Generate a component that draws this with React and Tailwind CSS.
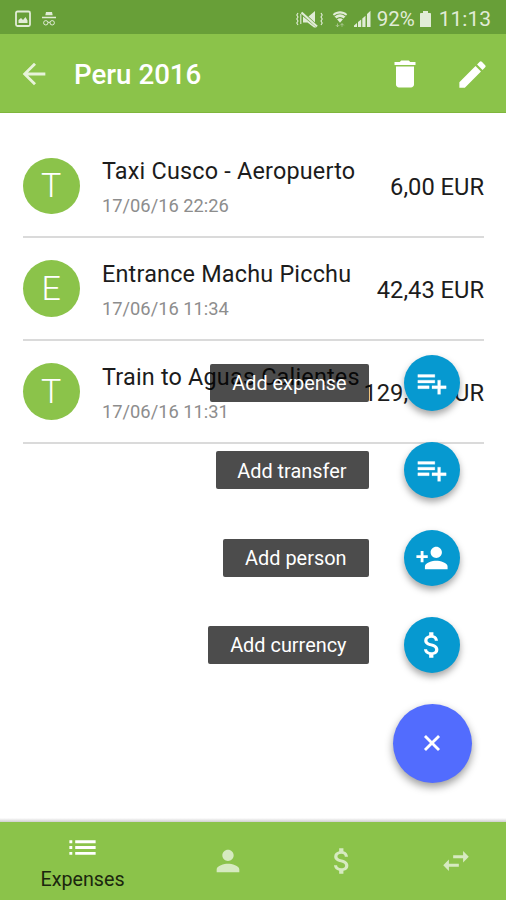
import {
	MdAdd,
	MdArrowBack,
	MdAttachMoney,
	MdDelete,
	MdEdit,
	MdList,
	MdPerson,
	MdPersonAdd,
	MdSwapHoriz,
} from "react-icons/md"

function ListAddIcon({ className }) {
	return (
		<svg className={className} viewBox="0 0 24 24" fill="currentColor" aria-hidden="true">
			<path d="M14 10H2v2h12v-2zm0-4H2v2h12V6zm4 8v-4h-2v4h-4v2h4v4h2v-4h4v-2h-4zM2 16h8v-2H2v2z" stroke="currentColor" strokeWidth="0.2" />
		</svg>
	)
}

const expenses = [
	{ title: "Taxi Cusco - Aeropuerto", date: "17/06/16 22:26", amount: "6,00 EUR" },
	{ title: "Entrance Machu Picchu", date: "17/06/16 11:34", amount: "42,43 EUR" },
	{ title: "Train to Aguas Calientes", date: "17/06/16 11:31", amount: "129,75 EUR" },
]

const actions = [
	{ name: "Add expense", icon: ListAddIcon, width: "w-[159px]" },
	{ name: "Add transfer", icon: ListAddIcon, width: "w-[153px]" },
	{ name: "Add person", icon: MdPersonAdd, width: "w-[146px]" },
	{ name: "Add currency", icon: MdAttachMoney, width: "w-[161px]" },
]

const tabs = [
	{ name: "People", icon: MdPerson },
	{ name: "Currencies", icon: MdAttachMoney },
	{ name: "Transfers", icon: MdSwapHoriz },
]

function StatusBar() {
	return (
		<div className="flex h-[34px] items-center justify-between bg-[#689f38] pt-[3px] pr-[15px] pl-[14px] text-[#e1ecd7]">
			<div className="flex items-center gap-[10px]">
				<svg width="18" height="18" viewBox="0 0 18 18" aria-hidden="true">
					<rect x="2" y="1.5" width="14" height="14.5" rx="1.5" fill="none" stroke="currentColor" strokeWidth="1.8" />
					<path d="M4.5 13V10l2.5-2 2 2 2.5-3 2 3.5V13z" fill="currentColor" />
				</svg>
				<svg width="14" height="16" viewBox="0 0 14 16" aria-hidden="true">
					<path d="M4 1h6l.7 3.2H3.3zM0 5.8h14v1.4H0z" fill="currentColor" />
					<g fill="none" stroke="currentColor" strokeWidth="1">
						<circle cx="3.8" cy="11.8" r="2.2" />
						<circle cx="10.2" cy="11.8" r="2.2" />
						<path d="M6 11.3h2" />
					</g>
				</svg>
			</div>
			<div className="flex items-center">
				<svg width="27" height="18" viewBox="0 0 27 18" aria-hidden="true">
					<path d="M2 3l-1.2 2L2 7 .8 9 2 11l-1.2 2L2 15M4.8 4v10M25 3l1.2 2L25 7l1.2 2-1.2 2 1.2 2-1.2 2" fill="none" stroke="currentColor" strokeWidth="1.1" />
					<path d="M7 6.5v6h4.5l6.5 5h2.5zM12.5 6.5L19 1v11.5z" fill="currentColor" />
					<path d="M5.5 2.5L21 16.5" stroke="currentColor" strokeWidth="2.2" />
				</svg>
				<svg className="ml-[9px]" width="16" height="18" viewBox="0 0 16 18" aria-hidden="true">
					<path d="M.8 4.2C5 .4 11 .4 15.2 4.2L8 12.8z" fill="currentColor" />
					<path d="M2.2 6.2c3.5-3 8.1-3 11.6 0M4.5 9c2.2-1.8 4.8-1.8 7 0" fill="none" stroke="#689f38" strokeWidth="1.1" />
					<path d="M5.5 13.5v3M3.800 15l1.700 1.800L7.200 15M10 16.800v-3M8.300 15.300l1.700-1.800 1.700 1.800" fill="none" stroke="currentColor" opacity=".5" />
				</svg>
				<svg className="ml-[5px]" width="19" height="18" viewBox="0 0 19 18" aria-hidden="true">
					<path d="M1 17v-1.5L4 13v4zM5 17v-5l3.2-2.5V17zM9.3 17V8.5l3.2-2.7V17zM14 17V4l3.5-3.3V17z" fill="currentColor" />
				</svg>
				<span className="ml-[5px] pt-px text-[20.5px] leading-none">92%</span>
				<svg className="ml-[4px]" width="13" height="18" viewBox="0 0 13 18" aria-hidden="true">
					<path d="M4 1h5v2h2.2q.8 0 .8.8V17H1V3.8q0-.8.8-.8H4z" fill="currentColor" />
				</svg>
				<span className="ml-[7px] pt-px text-[21px] leading-none">11:13</span>
			</div>
		</div>
	)
}

function Toolbar() {
	return (
		<header className="flex h-[79px] items-center border-b border-[#7fb63c] bg-[#8bc34a] pt-[2px] pr-[16px] pl-[17px] text-white">
			<MdArrowBack className="h-[34px] w-[34px] opacity-80" />
			<h1 className="ml-[23px] flex-1 pt-[2px] text-[27.7px] font-medium">Peru 2016</h1>
			<MdDelete className="h-[36px] w-[36px]" />
			<MdEdit className="ml-[32px] h-[35px] w-[35px]" />
		</header>
	)
}

function ExpenseRow({ expense }) {
	return (
		<li className="flex h-[102.8px] items-center border-b-2 border-[#dadada]">
			<div className="flex h-[56.5px] w-[56.5px] shrink-0 items-center justify-center rounded-full bg-[#8bc34a] text-[34px] font-light text-white">
				{expense.title[0]}
			</div>
			<div className="ml-[22.5px] flex-1 pt-[4px] whitespace-nowrap">
				<p className="text-[23.4px] leading-[30px] tracking-[0.2px] text-[#1c1c1c]">{expense.title}</p>
				<p className="mt-[7px] text-[18.3px] leading-[26px] text-[#8d8d8d]">{expense.date}</p>
			</div>
			<p className="pt-[4px] text-[23.7px] whitespace-nowrap text-[#1c1c1c]">{expense.amount}</p>
		</li>
	)
}

// Speed dial, floats over the list
function SpeedDial() {
	return (
		<div className="absolute right-[34px] bottom-[117px] flex flex-col items-end">
			{actions.map((action) => (
				<div key={action.name} className="mr-[12px] mb-[31.2px] flex items-center">
					<span className={`${action.width} flex h-[38px] items-center justify-end rounded-[2px] bg-black/70 pt-[2px] pr-[22.5px] text-[19.9px] whitespace-nowrap text-white`}>
						{action.name}
					</span>
					<button type="button" aria-label={action.name} className="ml-[35px] flex h-[56px] w-[56px] items-center justify-center rounded-full bg-[#0699d0] text-white shadow-[0_4px_7px_rgba(0,0,0,0.35)]">
						<action.icon className="h-[34px] w-[34px]" />
					</button>
				</div>
			))}
			<button type="button" aria-label="Close menu" className="flex h-[79px] w-[79px] items-center justify-center rounded-full bg-[#526cfe] text-white shadow-[0_4px_8px_rgba(0,0,0,0.4)]">
				<MdAdd className="mr-[1px] mb-[1px] h-[34px] w-[34px] rotate-45" />
			</button>
		</div>
	)
}

function BottomNav() {
	return (
		<nav className="grid h-[78px] grid-cols-[171px_114px_113px_115px] overflow-hidden bg-[#8bc34a]">
			<button type="button" className="flex flex-col items-center pt-[8px] pr-[6px]">
				<MdList className="h-[35px] w-[35px] text-white" />
				<span className="pt-px text-[19.7px] leading-[28px] text-[#1b270e]">Expenses</span>
			</button>
			{tabs.map((tab) => (
				<button key={tab.name} type="button" aria-label={tab.name} className="flex items-center justify-center text-white/65">
					<tab.icon className="h-[34px] w-[34px]" />
				</button>
			))}
		</nav>
	)
}

export default function App() {
	return (
		<div className="relative flex h-[900px] w-[506px] flex-col overflow-hidden bg-white font-['Roboto',sans-serif]">
			<StatusBar />
			<Toolbar />
			<main className="flex-1 pt-[22.4px] pr-[22px] pl-[23px]">
				<ul>
					{expenses.map((expense) => (
						<ExpenseRow key={expense.title} expense={expense} />
					))}
				</ul>
			</main>
			<div className="h-[4px] bg-linear-to-b from-white to-[#cfcfcf]" />
			<BottomNav />
			<SpeedDial />
		</div>
	)
}
